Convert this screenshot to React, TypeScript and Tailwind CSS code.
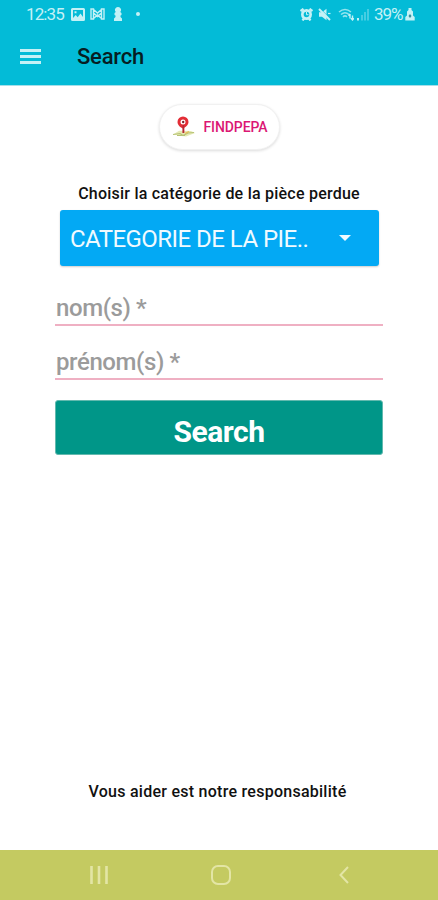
import { useState } from 'react';

const StatusBar = () => (
  <div className="flex h-7 items-center pl-[26px] pr-[23px] text-[#c4f1f6]">
    <span className="w-[39px] whitespace-nowrap text-[17px] leading-7 tracking-[-0.9px]">12:35</span>

    {/* Picture, mail, figure, more */}
    <svg viewBox="0 0 14 13" className="ml-[6px] h-[13px] w-[14px] shrink-0">
      <path fill="currentColor" fillRule="evenodd" d="M1.500 0h11A1.500 1.500 0 0 1 14 1.500v10a1.500 1.500 0 0 1-1.500 1.500h-11A1.500 1.500 0 0 1 0 11.500v-10A1.500 1.500 0 0 1 1.500 0zM2 2v8l2.700-3 2 2.200 2.800-3.700L12 9V2zM3.500 3.300h2v2h-2z" />
    </svg>
    <svg viewBox="0 0 15 12" className="ml-[5px] h-3 w-[15px] shrink-0" fill="none" stroke="currentColor" strokeWidth="1.400">
      <path d="M1 1v10h2.500V1zM11.500 1v10H14V1zM3.500 1.500l4 3.500 4-3.500M3.500 5l4 3.500 4-3.500M3.500 10.500l4-3.500 4 3.500" />
    </svg>
    <svg viewBox="0 0 8 14" className="ml-[9px] h-3.5 w-2 shrink-0" fill="currentColor">
      <path d="M4 0a3 3 0 0 1 2.200 5.100L7.500 6v2L6.500 8.500V10L8 11.500V14H0v-2.500L1.500 10V8.500L.5 8V6l1.300-.9A3 3 0 0 1 4 0z" />
    </svg>
    <span className="ml-[14px] h-1 w-1 rounded-full bg-[#c4f1f6]" />

    <div className="ml-auto flex items-center">
      {/* Alarm */}
      <svg viewBox="0 0 13 13" className="h-[13px] w-[13px]">
        <path d="M.5 3 3.500.8M12.500 3 9.500.8M2.500 12.500l1.500-2M10.500 12.500 9 10.500" stroke="currentColor" strokeWidth="2.200" />
        <path fill="currentColor" fillRule="evenodd" d="M6.500 1a5.500 5.500 0 1 1 0 11 5.500 5.500 0 0 1 0-11zm0 2.700a2.800 2.800 0 1 0 0 5.600 2.800 2.800 0 0 0 0-5.600z" />
        <path d="M6.500 4V6.700H8.500" fill="none" stroke="currentColor" />
      </svg>
      {/* Muted */}
      <svg viewBox="0 0 13 13" className="ml-[5px] h-[13px] w-[13px]">
        <path fill="currentColor" d="M1 4.200H4L8.500.8v11.400L4 8.800H1z" />
        <path d="m1.500 0 11 11" stroke="#03bbd7" />
        <path d="m1 1 11 11" stroke="currentColor" strokeWidth="2" />
        <path d="M10 5.500h2.500" fill="none" stroke="currentColor" strokeWidth="1.200" />
      </svg>
      {/* Wifi */}
      <svg viewBox="0 0 16 13" className="ml-[7px] h-[13px] w-4" fill="none" stroke="currentColor">
        <path d="M1 4q6-5 12 0M3 6.500q4-3.500 8 0M5 8.800q2-1.800 4 0" strokeWidth="1.600" opacity=".75" />
        <path d="M12 6v4.500M10.500 7.800 12 6M14.500 7.500V12M13 10.300l1.500 1.700 1.500-1.700" strokeWidth="1.400" />
      </svg>
      {/* Signal */}
      <svg viewBox="0 0 12 13" className="ml-[3px] h-[13px] w-3" fill="currentColor">
        <path d="M0 10h2v2.500H0z" />
        <path d="M4 7h2v5.500H4zM7 4h2v8.500H7zM10 1h2v11.500h-2z" opacity=".35" />
      </svg>
      <span className="ml-[5px] w-[31px] whitespace-nowrap text-[17px] leading-7 tracking-[-1px]">39%</span>
      {/* Battery saver */}
      <svg viewBox="0 0 10 13" className="h-[13px] w-[10px]">
        <path fill="currentColor" d="M3.500 0h3v2L8 3.500v4L9.700 9v3.500H.3V9L2 7.500v-4L3.500 2z" />
        <path fill="#3b8b99" d="m5 6 1.500 2L5 10 3.500 8z" />
      </svg>
    </div>
  </div>
);

const PinLogo = () => (
  <svg viewBox="0 0 24 22" className="h-[22px] w-6 shrink-0">
    <path fill="#e5e9b5" d="m1 18.500 6-3.800 12 .3 4 2-9 3.500z" />
    <path d="m1 18.500 7-1 3 2 5-2.500 6-.5M5 19.500h8" fill="none" stroke="#b6c275" strokeWidth="1.100" />
    <path d="m13 17.500 4-2" stroke="#e6bd57" strokeWidth="1.300" />
    <path fill="#e32d36" fillRule="evenodd" d="M11 .5A5.500 5.500 0 0 1 16.500 6c0 3-3 5-4.300 6v5h-1.500v-4.500C9 11.500 5.500 9.500 5.500 6A5.500 5.500 0 0 1 11 .5zm0 3A2.500 2.500 0 1 0 11 8.500a2.500 2.500 0 0 0 0-5z" />
    <circle cx="11.200" cy="6" r="1.200" fill="#7d2229" />
    <path d="M11.400 9v8" stroke="#b02a34" strokeWidth="1.600" />
  </svg>
);

const fieldClass =
  'block w-full border-b-2 border-[#efb0c3] bg-transparent pb-[2px] pl-px text-[24px] font-medium leading-[28px] tracking-[-0.4px] text-[#555] outline-none placeholder:text-[#9b9b9b] placeholder:opacity-100';

export default function App() {
  const [lastName,  setLastName]  = useState('');
  const [firstName, setFirstName] = useState('');

  return (
    <div className="flex h-[900px] w-[438px] flex-col overflow-hidden bg-white font-['Roboto',sans-serif]">

      {/* ── App bar ── */}
      <header className="h-[86px] shrink-0 border-b border-[#a5dfe9] bg-[#03bbd7]">
        <StatusBar />
        <div className="flex h-[57px] items-center pl-5">
          <button type="button" aria-label="Menu" className="flex w-[21px] flex-col gap-[3px]">
            <span className="h-[3px] bg-[#c4f1f6]" />
            <span className="h-[3px] bg-[#c4f1f6]" />
            <span className="h-[3px] bg-[#c4f1f6]" />
          </button>
          <h1 className="ml-9 text-[22px] font-medium leading-7 tracking-[-0.2px] text-[#061d22]">Search</h1>
        </div>
      </header>

      <main className="flex flex-1 flex-col">
        {/* ── Brand ── */}
        <div className="mt-[18px] flex h-[46px] w-[121px] items-center self-center rounded-full border border-[#f1f1f1] bg-white pl-3 shadow-[0_1px_3px_rgba(0,0,0,0.14)]">
          <PinLogo />
          <span className="ml-2 text-[14px] font-medium tracking-[-0.1px] text-[#db1874]">FINDPEPA</span>
        </div>

        <p className="mt-[34px] whitespace-nowrap text-center text-[16px] font-medium leading-5 tracking-[0.23px] text-[#111]">
          Choisir la catégorie de la pièce perdue
        </p>

        {/* ── Category ── */}
        <button type="button"
          className="ml-[60px] mt-[6px] flex h-14 w-[319px] items-center rounded-[3px] bg-[#03a9f4] pl-[10px] text-[#f0faff] shadow-[0_1px_2px_rgba(0,0,0,0.2)]">
          <span className="w-[269px] whitespace-nowrap pt-px text-left text-[24px] leading-7 tracking-[-0.54px]">CATEGORIE DE LA PIE..</span>
          <svg viewBox="0 0 12 6" className="h-1.5 w-3" fill="currentColor"><path d="M0 0h12L6 6z" /></svg>
        </button>

        {/* ── Form ── */}
        <form onSubmit={e => e.preventDefault()} className="ml-[55px] mt-[28px] w-[328px]">
          <input value={lastName} onChange={e => setLastName(e.target.value)}
            placeholder="nom(s) *" className={fieldClass} />
          <input value={firstName} onChange={e => setFirstName(e.target.value)}
            placeholder="prénom(s) *" className={`${fieldClass} mt-[22px]`} />
          <button type="submit"
            className="mt-[20px] flex h-[55px] w-full items-center justify-center rounded-[3px] border border-[#62b9ae] bg-[#009688] pt-2 text-[30px] font-bold leading-9 tracking-[-0.5px] text-white">
            Search
          </button>
        </form>

        <p className="mb-[48px] mt-auto whitespace-nowrap pr-[3px] text-center text-[16px] font-medium leading-5 tracking-[0.26px] text-[#111]">
          Vous aider est notre responsabilité
        </p>
      </main>

      {/* ── System navigation ── */}
      <nav className="flex h-[50px] shrink-0 items-center bg-[#c4ca61] pl-[90px] text-[#e3e5a5]">
        <svg viewBox="0 0 18 18" className="h-[18px] w-[18px]" stroke="currentColor" strokeWidth="2.600"><path d="M1.500 0v18M9 0v18M16.500 0v18" /></svg>
        <svg viewBox="0 0 20 20" className="ml-[103px] h-5 w-5" fill="none" stroke="currentColor" strokeWidth="2"><rect x="1" y="1" width="18" height="18" rx="6" /></svg>
        <svg viewBox="0 0 10 18" className="ml-[108px] h-[18px] w-2.5" fill="none" stroke="currentColor" strokeWidth="2"><path d="M9 1 1.500 9 9 17" /></svg>
      </nav>
    </div>
  );
}
